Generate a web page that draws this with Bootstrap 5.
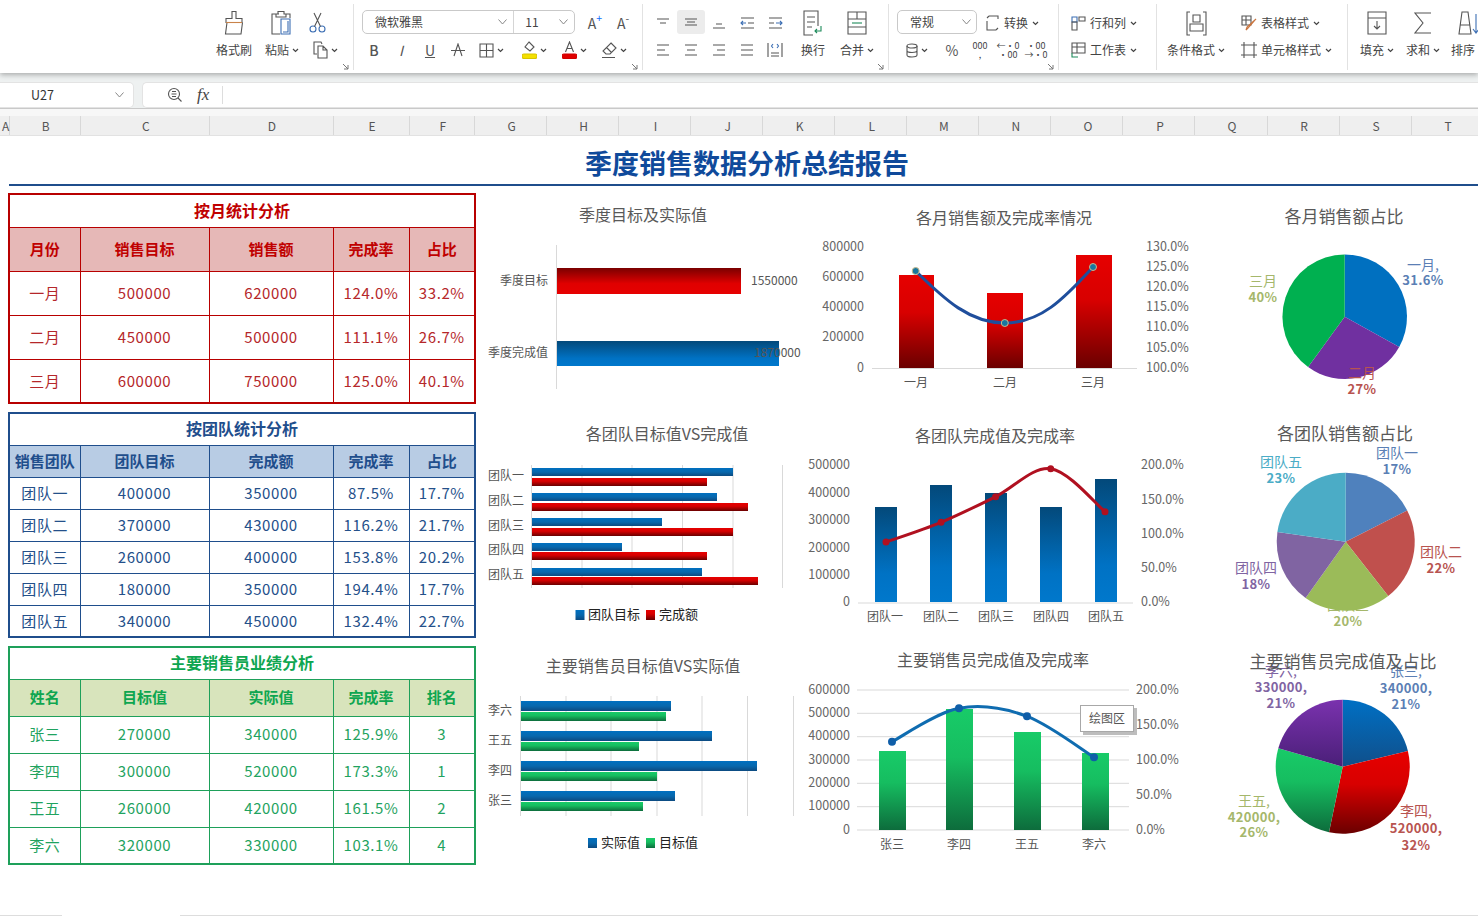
<!DOCTYPE html>
<html lang="zh-CN">
<head>
<meta charset="utf-8">
<title>季度销售数据分析总结报告</title>
<link href="https://cdn.jsdelivr.net/npm/bootstrap@5.3.0/dist/css/bootstrap.min.css" rel="stylesheet">
<style>
html,body{height:916px;overflow:hidden;background:#fff}
body{font-family:"Noto Sans CJK SC","Liberation Sans",sans-serif;color:#444;font-size:12px;width:1478px}
.rb{height:73px;padding-left:214px;background:#fff;box-shadow:0 2px 5px rgba(0,0,0,.28);position:relative;z-index:2}
.rg{position:relative;height:66px;margin-top:4px;padding-top:4px;border-right:1px solid #e2e2e2;flex:none}
.g1{width:140px}.g2{width:289px;padding-left:8px}.g3{width:246px;padding-left:6px}.g4{width:170px;padding-left:8px}.g5{width:98px;padding-left:12px}.g6{width:191px}.g7{width:130px;border-right:0;overflow:hidden}
.r1{height:30px}.r2{height:24px}
.ti{display:inline-flex;align-items:center;justify-content:center;flex:none;white-space:nowrap;line-height:1}
.ti svg{flex:none}
.wd6{width:6px}.wd8{width:8px}.wd10{width:10px}.wd18{width:18px}.wd24{width:24px}.wd27{width:27px}.wd28{width:28px}.wd30{width:30px}.wd32{width:32px}.wd34{width:34px}.wd36{width:36px}.wd38{width:38px}.wd40{width:40px}.wd47{width:47px}.wd48{width:48px}.wd54{width:54px}.wd58{width:58px}.wd78{width:78px}.wd80{width:80px}.wd11{width:11px}
.gl{font-size:14px;color:#555}
.stk{font-size:9px;line-height:9px;text-align:center;color:#444}
.ic{fill:none;stroke:#555;stroke-width:1.1}
.blu{stroke:#3d6fb4}
.cv{width:7px;height:5px;margin-left:3px;fill:none;stroke:#444;stroke-width:1.2}
.lanc{position:absolute;right:4px;bottom:0;width:7px;height:7px;fill:none;stroke:#777;stroke-width:1}
.fbox{width:213px;height:24px;border:1px solid #c9c9c9;border-radius:5px;margin-top:-2px}
.nbox{width:80px;height:24px;border:1px solid #c9c9c9;border-radius:5px;margin-top:-2px;padding:0 5px 0 12px}
.fn1{width:152px;padding:0 6px 0 12px;border-right:1px solid #d5d5d5;height:100%}
.fn2{width:60px;padding:0 6px 0 11px}
.cvb{width:9px;height:6px;fill:none;stroke:#888;stroke-width:1}
.hl{background:#ececec;border-radius:3px;height:24px;margin-top:-2px}
.fx{height:35px;background:#eef1f1;padding-top:9px;gap:8px}
.nmbox{width:134px;height:26px;background:#fff;border-radius:0 5px 5px 0;border:1px solid #e3e3e3;border-left:0;padding:0 9px 0 31px;color:#333;font-size:12.5px}
.fmbox{flex:1;height:26px;background:#fff;border-radius:5px 0 0 5px;border:1px solid #e3e3e3;border-right:0;padding-left:24px}
.fxt{font:italic 17px "Liberation Serif",serif;color:#444;margin-left:15px;padding-right:13px;border-right:1px solid #ddd;line-height:18px}
.band{height:28px;background:#f7f7f7;border-top:1px solid #c9c9c9;padding-top:7px}
.colh{display:grid;grid-template-columns:9.5px 71.5px 128.5px 124px 76px 65.5px repeat(14,72.05px);height:20px;background:#efefef;color:#555;font-size:12px;line-height:20px;text-align:center;overflow:hidden;border-bottom:1px solid #e2e2e2}
.colh span{border-right:1px solid #d8d8d8;padding-left:2px}
.rpt{margin-left:9px;height:50px;border-bottom:2px solid #1f4e8c;color:#0f4a9b;font-size:27px;font-weight:700;line-height:53px;text-align:center;padding-left:7px;letter-spacing:0}
.lft{width:467px;margin:7px 5px 0 8px;flex:none;gap:8px}
.tbx{table-layout:fixed;width:467px;margin:0;border-collapse:collapse}
.table.tbx{border-width:2px;border-style:solid}
.table.tbx>*>*>*{padding:0;text-align:center;vertical-align:middle;font-size:15px;letter-spacing:.6px;border-width:1px;border-style:solid;line-height:1.1}
.table.tbx .ttl>*{font-size:16px;font-weight:700;letter-spacing:0}
.table.tbx .hd>*{font-weight:700;letter-spacing:0}
.c1{width:71px}.c2{width:129px}.c3{width:124px}.c4{width:76px}.c5{width:66px}
.table.t-red{--bs-table-color:#b5272a;--bs-table-border-color:#c00000;border-color:#b80000}
.table.t-red .ttl>*,.table.t-red .hd>*{color:#c00000}
.table.t-red .hd>*{background:#e6b8b7}
.table.t-blu{--bs-table-color:#24508a;--bs-table-border-color:#1f4e8c;border-color:#1f4e8c}
.table.t-blu .ttl>*,.table.t-blu .hd>*{color:#1f4e8c}
.table.t-blu .hd>*{background:#b8cce4}
.table.t-grn{--bs-table-color:#1fa35f;--bs-table-border-color:#1ea05a;border-color:#1ea05a}
.table.t-grn .ttl>*,.table.t-grn .hd>*{color:#0fa650}
.table.t-grn .hd>*{background:#d8e4bc}
.h33{height:33px}.h44{height:44px}.h32{height:32px}.h37{height:37px}
.chs{display:grid;grid-template-columns:325px 395px 278px;grid-template-rows:225px 225px 230px;margin-top:4px}
.chs svg{display:block;overflow:visible}
.chs text{font-family:"Noto Sans CJK SC","Liberation Sans",sans-serif;dominant-baseline:central;fill:#666;font-size:12.5px;transform:translateY(-1.6px)}
.chs text.tt{font-size:16px;fill:#595959;text-anchor:middle}
.chs text.tp{font-size:17px}
.chs text.mid{text-anchor:middle}
.chs text.end{text-anchor:end}
.chs text.sm{font-size:12px;fill:#555}
.chs text.lg{font-size:13px;fill:#222}
.chs text.pl{font-size:14px;text-anchor:middle}
.chs text.pb{font-size:13px;font-weight:700;text-anchor:middle;letter-spacing:.3px}
.chs text.cb{fill:#5b7fb5}.chs text.cr{fill:#b85450}.chs text.cg{fill:#a5b76b}.chs text.cp{fill:#8064a2}.chs text.ct{fill:#4bacc6}
.ax{stroke:#d9d9d9;stroke-width:1;fill:none}
.footln{height:1px;margin-top:45px;background:linear-gradient(90deg,#ddd 62px,#fff 62px,#fff 180px,#ddd 180px)}
</style>
</head>
<body>
<svg width="0" height="0" class="d-block position-absolute">
<defs>
<symbol id="cv" viewBox="0 0 7 5"><path d="M1 1l2.500 2.500L6 1"/></symbol>
<symbol id="cvb" viewBox="0 0 9 6"><path d="M.5.500l4 4.500 4-4.500"/></symbol>
<symbol id="lan" viewBox="0 0 7 7"><path d="M1 1l5 5M6 2v4H2"/></symbol>
<linearGradient id="rd1" x1="0" y1="0" x2="0" y2="1"><stop offset="0" stop-color="#7a0000"/><stop offset=".6" stop-color="#e00000"/><stop offset="1" stop-color="#e60000"/></linearGradient>
<linearGradient id="rd2" x1="0" y1="0" x2="0" y2="1"><stop offset="0" stop-color="#e60000"/><stop offset=".4" stop-color="#d80000"/><stop offset="1" stop-color="#6a0000"/></linearGradient>
<linearGradient id="bl1" x1="0" y1="0" x2="0" y2="1"><stop offset="0" stop-color="#03497a"/><stop offset=".7" stop-color="#0072c4"/><stop offset="1" stop-color="#0078cc"/></linearGradient>
<linearGradient id="bl2" x1="0" y1="0" x2="0" y2="1"><stop offset="0" stop-color="#0070c0"/><stop offset=".5" stop-color="#0868ad"/><stop offset="1" stop-color="#0c4a80"/></linearGradient>
<linearGradient id="gr1" x1="0" y1="0" x2="0" y2="1"><stop offset="0" stop-color="#18cb68"/><stop offset=".4" stop-color="#16bd60"/><stop offset="1" stop-color="#0d6c3c"/></linearGradient>
<linearGradient id="pp1" x1="0" y1="0" x2="0" y2="1"><stop offset="0" stop-color="#7a32ae"/><stop offset="1" stop-color="#4a1f78"/></linearGradient>
<linearGradient id="pb3" x1="0" y1="0" x2="0" y2="1"><stop offset="0" stop-color="#0070c4"/><stop offset="1" stop-color="#104f8a"/></linearGradient>
</defs>
</svg>

<header class="rb d-flex">
  <div class="rg g1">
    <div class="r1 d-flex align-items-center">
      <span class="ti wd40"><svg class="ic" width="22" height="26" viewBox="0 0 22 26"><path d="M9 1.500h4v7h6v4H3v-4h6zM4 12.500L2.500 24H18l1.500-11.500"/><path d="M3 12.500h16" stroke="#c9834a"/></svg></span>
      <span class="ti wd54"><svg class="ic" width="22" height="26" viewBox="0 0 22 26"><path d="M9 4H2v20h8M15 4h5v4M8 4V1.500h6V4h2v3H6V4z"/><path class="blu" d="M11 9h9v15h-9zM13 22h5V11"/></svg></span>
      <span class="ti wd18"><svg class="ic blu" width="17" height="22" viewBox="0 0 17 22"><circle cx="4" cy="17" r="3"/><circle cx="13" cy="17" r="3"/><path stroke="#555" d="M5.500 14.500L12 1M11.500 14.500L5 1"/></svg></span>
    </div>
    <div class="r2 d-flex align-items-center">
      <span class="ti wd40">格式刷</span><span class="wd10"></span>
      <span class="ti wd36">粘贴<svg class="cv"><use href="#cv"/></svg></span><span class="wd10"></span>
      <span class="ti wd30"><svg class="ic" width="15" height="18" viewBox="0 0 15 18"><path d="M4 13H1V1h7l1 2"/><path d="M5 5h5l4 4v8H5zM10 5v4h4"/></svg><svg class="cv"><use href="#cv"/></svg></span>
    </div>
    <svg class="lanc"><use href="#lan"/></svg>
  </div>
  <div class="rg g2">
    <div class="r1 d-flex align-items-center">
      <div class="fbox d-flex align-items-center">
        <div class="fn1 d-flex align-items-center justify-content-between"><span>微软雅黑</span><svg class="cvb"><use href="#cvb"/></svg></div>
        <div class="fn2 d-flex align-items-center justify-content-between"><span>11</span><svg class="cvb"><use href="#cvb"/></svg></div>
      </div>
      <span class="wd6"></span>
      <span class="ti wd28 gl">A<sup class="text-primary">+</sup></span>
      <span class="ti wd28 gl">A<sup>-</sup></span>
    </div>
    <div class="r2 d-flex align-items-center">
      <span class="ti wd24 gl fw-medium">B</span>
      <span class="ti wd30 gl fst-italic">I</span>
      <span class="ti wd28 gl text-decoration-underline">U</span>
      <span class="ti wd28"><svg class="ic" width="14" height="14" viewBox="0 0 14 14"><path d="M3 13L7 1l4 12M0 7.500h14"/></svg></span>
      <span class="ti wd38"><svg class="ic" width="15" height="15" viewBox="0 0 15 15"><path d="M1 1h13v13H1zM7.500 1v13M1 7.500h13"/></svg><svg class="cv"><use href="#cv"/></svg></span>
      <span class="ti wd48"><svg class="ic" width="15" height="18" viewBox="0 0 15 18"><path d="M7 1l5 5-4 4-5-4zM3 6l4-5"/><rect x="0" y="13" width="15" height="4.500" rx="2" fill="#f4e000" stroke="#d8c400"/></svg><svg class="cv"><use href="#cv"/></svg></span>
      <span class="ti wd32"><svg class="ic" width="15" height="18" viewBox="0 0 15 18"><path d="M3.500 11L7.500 1l4 10M5 7.500h5"/><rect x="0" y="13" width="15" height="4.500" rx="2" fill="#e00000" stroke="#d00000"/></svg><svg class="cv"><use href="#cv"/></svg></span>
      <span class="ti wd47"><svg class="ic" width="16" height="17" viewBox="0 0 16 17"><path d="M10 1l5 5-6 6H5L2 9zM5.500 5.500l5 5M1 15.500h13"/></svg><svg class="cv"><use href="#cv"/></svg></span>
    </div>
    <svg class="lanc"><use href="#lan"/></svg>
  </div>
  <div class="rg g3">
    <div class="r1 d-flex align-items-center">
      <span class="ti wd28"><svg class="ic" width="14" height="14" viewBox="0 0 14 14"><path d="M1 3h12M4 7h6"/></svg></span>
      <span class="ti wd28 hl"><svg class="ic" width="14" height="14" viewBox="0 0 14 14"><path d="M1 4h12M3 7h8M1 10h12"/></svg></span>
      <span class="ti wd28"><svg class="ic" width="14" height="14" viewBox="0 0 14 14"><path d="M4 8h6M1 12h12"/></svg></span>
      <span class="ti wd28"><svg class="ic" width="15" height="14" viewBox="0 0 15 14"><path d="M1 2h13M8 7h6M1 12h13"/><path class="blu" d="M6 7H1M3 5L1 7l2 2"/></svg></span>
      <span class="ti wd28"><svg class="ic" width="15" height="14" viewBox="0 0 15 14"><path d="M1 2h13M1 7h5M1 12h13"/><path class="blu" d="M8 7h6M12 5l2 2-2 2"/></svg></span>
      <span class="ti wd48"><svg class="ic" width="20" height="26" viewBox="0 0 20 26"><path d="M15 16V1H1v24h9M4 7h8M4 12h8M4 17h5"/><path stroke="#1c8a5a" d="M18 16v5h-6M14 19l-2 2 2 2"/></svg></span>
      <span class="ti wd40"><svg class="ic" width="20" height="24" viewBox="0 0 20 24"><path d="M1 1h18v22H1zM1 8h18M1 16h18M10 1v7"/><path d="M5 12h10" stroke="#1c8a5a"/></svg></span>
    </div>
    <div class="r2 d-flex align-items-center">
      <span class="ti wd28"><svg class="ic" width="14" height="14" viewBox="0 0 14 14"><path d="M1 2h12M1 7h8M1 12h12"/></svg></span>
      <span class="ti wd28"><svg class="ic" width="14" height="14" viewBox="0 0 14 14"><path d="M1 2h12M3 7h8M1 12h12"/></svg></span>
      <span class="ti wd28"><svg class="ic" width="14" height="14" viewBox="0 0 14 14"><path d="M1 2h12M5 7h8M1 12h12"/></svg></span>
      <span class="ti wd28"><svg class="ic" width="14" height="14" viewBox="0 0 14 14"><path d="M1 2h12M1 7h12M1 12h12"/></svg></span>
      <span class="ti wd28"><svg class="ic" width="16" height="16" viewBox="0 0 16 16"><path d="M1 1v14M15 1v14M4 11h8M4 14h8"/><path class="blu" d="M6 2L4.500 4 6 6M10 2l1.500 2L10 6"/></svg></span>
      <span class="ti wd48">换行</span>
      <span class="ti wd40">合并<svg class="cv"><use href="#cv"/></svg></span>
    </div>
    <svg class="lanc"><use href="#lan"/></svg>
  </div>
  <div class="rg g4">
    <div class="r1 d-flex align-items-center">
      <div class="nbox d-flex align-items-center justify-content-between"><span>常规</span><svg class="cvb"><use href="#cvb"/></svg></div>
      <span class="wd8"></span>
      <span class="ti"><svg class="ic me-1" width="15" height="16" viewBox="0 0 15 16"><path d="M13 4V1H4M4 1L2 3M2 6v9h9M11 15l2-2"/></svg>转换<svg class="cv ms-1"><use href="#cv"/></svg></span>
    </div>
    <div class="r2 d-flex align-items-center">
      <span class="wd6"></span>
      <span class="ti wd27"><svg class="ic" width="12" height="15" viewBox="0 0 12 15"><ellipse cx="6" cy="3" rx="5" ry="2"/><path d="M1 3v9c0 1.500 2 2 5 2s5-.5 5-2V3M1 7.500c0 1.500 2 2 5 2s5-.5 5-2"/></svg><svg class="cv"><use href="#cv"/></svg></span>
      <span class="wd8"></span>
      <span class="ti wd28 gl">%</span>
      <span class="ti wd28 stk">000<br>,</span>
      <span class="ti wd28 stk">←·0<br>·00</span>
      <span class="ti wd28 stk">·00<br>→·0</span>
    </div>
    <svg class="lanc"><use href="#lan"/></svg>
  </div>
  <div class="rg g5">
    <div class="r1 d-flex align-items-center">
      <span class="ti"><svg class="ic me-1" width="15" height="15" viewBox="0 0 15 15"><path class="blu" d="M1 1h5v5H1z"/><path d="M1 6h5v8H1zM8 1h6v4H8z"/></svg>行和列<svg class="cv ms-1"><use href="#cv"/></svg></span>
    </div>
    <div class="r2 d-flex align-items-center">
      <span class="ti"><svg class="ic me-1" width="15" height="16" viewBox="0 0 15 16"><path d="M1 1h13v10H1zM1 5h13M6 1v10"/><path d="M1 11v4h6" stroke="#1c8a5a"/></svg>工作表<svg class="cv ms-1"><use href="#cv"/></svg></span>
    </div>
  </div>
  <div class="rg g6">
    <div class="r1 d-flex align-items-center">
      <span class="ti wd78"><svg class="ic" width="21" height="25" viewBox="0 0 21 25"><path d="M4 1H1v23h3M17 1h3v23h-3M7 4h7v7H7zM4 13h13v7H4z"/></svg></span>
      <span class="wd6"></span>
      <span class="ti"><svg class="ic me-1" width="16" height="16" viewBox="0 0 16 16"><path d="M1 1h9v9H1zM1 5h9M5 1v9"/><path stroke="#c9753f" d="M15 4l-8 9-2 2 1-3z"/></svg>表格样式<svg class="cv ms-1"><use href="#cv"/></svg></span>
    </div>
    <div class="r2 d-flex align-items-center">
      <span class="ti wd78">条件格式<svg class="cv"><use href="#cv"/></svg></span>
      <span class="wd6"></span>
      <span class="ti"><svg class="ic me-1" width="16" height="16" viewBox="0 0 16 16"><path d="M0 3h16M0 13h16M3 0v16M13 0v16"/></svg>单元格样式<svg class="cv ms-1"><use href="#cv"/></svg></span>
    </div>
  </div>
  <div class="rg g7">
    <div class="r1 d-flex align-items-center">
      <span class="ti wd58"><svg class="ic" width="20" height="24" viewBox="0 0 20 24"><path d="M1 1h18v22H1zM1 7h18"/><path d="M10 10v8M7 15l3 3 3-3"/></svg></span>
      <span class="ti wd34"><svg class="ic" width="18" height="22" viewBox="0 0 18 22"><path d="M17 1H1l8 10-8 10h16"/></svg></span>
      <span class="ti wd58"><svg class="ic" width="24" height="24" viewBox="0 0 24 24"><path d="M5 1h6l3 22H2zM3 14h10"/><path class="blu" d="M19 3v19M16 18l3 4 3-4"/></svg></span>
    </div>
    <div class="r2 d-flex align-items-center">
      <span class="ti wd58">填充<svg class="cv"><use href="#cv"/></svg></span>
      <span class="ti wd34">求和<svg class="cv"><use href="#cv"/></svg></span>
      <span class="wd11"></span>
      <span class="ti">排序</span>
    </div>
  </div>
</header>

<div class="fx d-flex">
  <div class="nmbox d-flex align-items-center justify-content-between flex-none"><span>U27</span><svg class="cvb"><use href="#cvb"/></svg></div>
  <div class="fmbox d-flex align-items-center">
    <svg class="ic" width="15" height="16" viewBox="0 0 15 16"><circle cx="7" cy="7" r="5.500"/><path d="M11 11l3.500 3.500M4.500 7h5M5 4.500h4M5 9.500h4"/></svg>
    <span class="fxt">fx</span>
  </div>
</div>
<div class="band">
  <div class="colh">
    <span>A</span><span>B</span><span>C</span><span>D</span><span>E</span><span>F</span><span>G</span><span>H</span><span>I</span><span>J</span><span>K</span><span>L</span><span>M</span><span>N</span><span>O</span><span>P</span><span>Q</span><span>R</span><span>S</span><span>T</span>
  </div>
</div>

<main>
  <div class="rpt">季度销售数据分析总结报告</div>
  <div class="d-flex">
    <div class="lft d-flex flex-column">
      <table class="table table-bordered tbx t-red">
        <colgroup><col class="c1"><col class="c2"><col class="c3"><col class="c4"><col class="c5"></colgroup>
        <thead>
          <tr class="ttl h33"><th colspan="5">按月统计分析</th></tr>
          <tr class="hd h44"><th>月份</th><th>销售目标</th><th>销售额</th><th>完成率</th><th>占比</th></tr>
        </thead>
        <tbody>
          <tr class="h44"><td>一月</td><td>500000</td><td>620000</td><td>124.0%</td><td>33.2%</td></tr>
          <tr class="h44"><td>二月</td><td>450000</td><td>500000</td><td>111.1%</td><td>26.7%</td></tr>
          <tr class="h44"><td>三月</td><td>600000</td><td>750000</td><td>125.0%</td><td>40.1%</td></tr>
        </tbody>
      </table>
      <table class="table table-bordered tbx t-blu">
        <colgroup><col class="c1"><col class="c2"><col class="c3"><col class="c4"><col class="c5"></colgroup>
        <thead>
          <tr class="ttl h32"><th colspan="5">按团队统计分析</th></tr>
          <tr class="hd h32"><th>销售团队</th><th>团队目标</th><th>完成额</th><th>完成率</th><th>占比</th></tr>
        </thead>
        <tbody>
          <tr class="h32"><td>团队一</td><td>400000</td><td>350000</td><td>87.5%</td><td>17.7%</td></tr>
          <tr class="h32"><td>团队二</td><td>370000</td><td>430000</td><td>116.2%</td><td>21.7%</td></tr>
          <tr class="h32"><td>团队三</td><td>260000</td><td>400000</td><td>153.8%</td><td>20.2%</td></tr>
          <tr class="h32"><td>团队四</td><td>180000</td><td>350000</td><td>194.4%</td><td>17.7%</td></tr>
          <tr class="h32"><td>团队五</td><td>340000</td><td>450000</td><td>132.4%</td><td>22.7%</td></tr>
        </tbody>
      </table>
      <table class="table table-bordered tbx t-grn">
        <colgroup><col class="c1"><col class="c2"><col class="c3"><col class="c4"><col class="c5"></colgroup>
        <thead>
          <tr class="ttl h32"><th colspan="5">主要销售员业绩分析</th></tr>
          <tr class="hd h37"><th>姓名</th><th>目标值</th><th>实际值</th><th>完成率</th><th>排名</th></tr>
        </thead>
        <tbody>
          <tr class="h37"><td>张三</td><td>270000</td><td>340000</td><td>125.9%</td><td>3</td></tr>
          <tr class="h37"><td>李四</td><td>300000</td><td>520000</td><td>173.3%</td><td>1</td></tr>
          <tr class="h37"><td>王五</td><td>260000</td><td>420000</td><td>161.5%</td><td>2</td></tr>
          <tr class="h37"><td>李六</td><td>320000</td><td>330000</td><td>103.1%</td><td>4</td></tr>
        </tbody>
      </table>
    </div>

    <div class="chs">
      <!-- row 1 -->
      <svg width="325" height="225" viewBox="480 190 325 225">
        <text class="tt" x="643" y="216">季度目标及实际值</text>
        <path class="ax" d="M556.500 245V389"/>
        <rect x="557" y="268" width="184" height="26" fill="url(#rd1)"/>
        <rect x="557" y="341" width="222" height="25" fill="url(#bl1)"/>
        <text class="sm end" x="548" y="281">季度目标</text>
        <text class="sm end" x="548" y="353">季度完成值</text>
        <text class="sm" x="751" y="281">1550000</text>
        <text class="sm" x="754" y="353">1870000</text>
      </svg>
      <svg width="395" height="225" viewBox="805 190 395 225">
        <text class="tt" x="1004" y="219">各月销售额及完成率情况</text>
        <text class="end" x="864" y="247">800000</text><text class="end" x="864" y="277">600000</text><text class="end" x="864" y="307">400000</text><text class="end" x="864" y="337">200000</text><text class="end" x="864" y="368">0</text>
        <text x="1146" y="247">130.0%</text><text x="1146" y="267">125.0%</text><text x="1146" y="287">120.0%</text><text x="1146" y="307">115.0%</text><text x="1146" y="327">110.0%</text><text x="1146" y="348">105.0%</text><text x="1146" y="368">100.0%</text>
        <rect x="899" y="275" width="35" height="93" fill="url(#rd2)"/>
        <rect x="987" y="293" width="36" height="75" fill="url(#rd2)"/>
        <rect x="1076" y="255" width="36" height="113" fill="url(#rd2)"/>
        <path class="ax" d="M872 368.500H1137"/>
        <path d="M915.700 271C945 300 970 323 1004.800 323C1040 323 1063 300 1093 267" fill="none" stroke="#1f4e9c" stroke-width="3"/>
        <g fill="#17769f" stroke="#c9b98a"><circle cx="915.700" cy="271" r="3.500"/><circle cx="1004.800" cy="323" r="3.500"/><circle cx="1093" cy="267" r="3.500"/></g>
        <text class="mid sm" x="916" y="383">一月</text><text class="mid sm" x="1005" y="383">二月</text><text class="mid sm" x="1093" y="383">三月</text>
      </svg>
      <svg width="278" height="225" viewBox="1200 190 278 225">
        <text class="tt tp" x="1344" y="217">各月销售额占比</text>
        <path d="M1344.700 316.700V254.400A62.300 62.300 0 0 1 1399.200 346.900Z" fill="#0070c0"/>
        <path d="M1344.700 316.700L1399.200 346.900A62.300 62.300 0 0 1 1308.100 367.100Z" fill="#7030a0"/>
        <path d="M1344.700 316.700L1308.100 367.100A62.300 62.300 0 0 1 1344.700 254.400Z" fill="#00b050"/>
        <text class="pl cb" x="1423" y="266">一月,</text><text class="pb cb" x="1423" y="281">31.6%</text>
        <text class="pl cr" x="1362" y="374">二月</text><text class="pb cr" x="1362" y="390">27%</text>
        <text class="pl cg" x="1263" y="282">三月</text><text class="pb cg" x="1263" y="298">40%</text>
      </svg>
      <!-- row 2 -->
      <svg width="325" height="225" viewBox="480 415 325 225">
        <text class="tt" x="667" y="435">各团队目标值VS完成值</text>
        <path class="ax" d="M531.500 465V588M582 465V588M632 465V588M682.500 465V588M733 465V588M782.500 465V588"/>
        <g fill="url(#bl2)"><rect x="532" y="468" width="201" height="8"/><rect x="532" y="493" width="185" height="8"/><rect x="532" y="518" width="130" height="8"/><rect x="532" y="543" width="90" height="8"/><rect x="532" y="568" width="170" height="8"/></g>
        <g fill="url(#rd2)"><rect x="532" y="478" width="175" height="8"/><rect x="532" y="503" width="216" height="8"/><rect x="532" y="528" width="201" height="8"/><rect x="532" y="552" width="175" height="8"/><rect x="532" y="577" width="226" height="8"/></g>
        <text class="sm end" x="524" y="476">团队一</text><text class="sm end" x="524" y="501">团队二</text><text class="sm end" x="524" y="526">团队三</text><text class="sm end" x="524" y="550">团队四</text><text class="sm end" x="524" y="575">团队五</text>
        <rect x="575.500" y="610" width="9" height="10" fill="url(#bl2)"/><text class="lg" x="588" y="615">团队目标</text>
        <rect x="646" y="610" width="9" height="10" fill="url(#rd2)"/><text class="lg" x="659" y="615">完成额</text>
      </svg>
      <svg width="395" height="225" viewBox="805 415 395 225">
        <text class="tt" x="995" y="437">各团队完成值及完成率</text>
        <text class="end" x="850" y="465">500000</text><text class="end" x="850" y="493">400000</text><text class="end" x="850" y="520">300000</text><text class="end" x="850" y="548">200000</text><text class="end" x="850" y="575">100000</text><text class="end" x="850" y="602">0</text>
        <text x="1141" y="465">200.0%</text><text x="1141" y="500">150.0%</text><text x="1141" y="534">100.0%</text><text x="1141" y="568">50.0%</text><text x="1141" y="602">0.0%</text>
        <g fill="url(#bl1)"><rect x="875" y="507" width="22" height="95"/><rect x="930" y="485" width="22" height="117"/><rect x="985" y="493" width="22" height="109"/><rect x="1040" y="507" width="22" height="95"/><rect x="1095" y="479" width="22" height="123"/></g>
        <path class="ax" d="M858 603H1133"/>
        <path d="M886 542C895.200 538.700 922.700 529.900 941 522.300C959.300 514.700 977.300 505.700 995.600 496.700C1013.900 487.700 1032.500 466.200 1050.700 468.700C1068.900 471.200 1096 504.500 1105 511.700" fill="none" stroke="#b01020" stroke-width="3"/>
        <g fill="#b01020"><circle cx="886" cy="542" r="3.500"/><circle cx="941" cy="522.300" r="3.500"/><circle cx="995.600" cy="496.700" r="3.500"/><circle cx="1050.700" cy="468.700" r="3.500"/><circle cx="1105" cy="511.700" r="3.500"/></g>
        <text class="mid sm" x="885" y="617">团队一</text><text class="mid sm" x="941" y="617">团队二</text><text class="mid sm" x="996" y="617">团队三</text><text class="mid sm" x="1051" y="617">团队四</text><text class="mid sm" x="1106" y="617">团队五</text>
      </svg>
      <svg width="278" height="225" viewBox="1200 415 278 225">
        <text class="tt tp" x="1345" y="434">各团队销售额占比</text>
        <text class="pl cg" x="1348" y="606">团队三</text>
        <path d="M1345.700 541.700V472.700A69 69 0 0 1 1407.200 510.400Z" fill="#4f81bd"/>
        <path d="M1345.700 541.700L1407.200 510.400A69 69 0 0 1 1388.200 596.100Z" fill="#c0504d"/>
        <path d="M1345.700 541.700L1388.200 596.100A69 69 0 0 1 1305.600 597.900Z" fill="#9bbb59"/>
        <path d="M1345.700 541.700L1305.600 597.900A69 69 0 0 1 1277.400 532.100Z" fill="#8064a2"/>
        <path d="M1345.700 541.700L1277.400 532.100A69 69 0 0 1 1345.700 472.700Z" fill="#4bacc6"/>
        <text class="pl cb" x="1397" y="454">团队一</text><text class="pb cb" x="1397" y="470">17%</text>
        <text class="pl cr" x="1441" y="553">团队二</text><text class="pb cr" x="1441" y="569">22%</text>
        <text class="pb cg" x="1348" y="622">20%</text>
        <text class="pl cp" x="1256" y="569">团队四</text><text class="pb cp" x="1256" y="585">18%</text>
        <text class="pl ct" x="1281" y="463">团队五</text><text class="pb ct" x="1281" y="479">23%</text>
      </svg>
      <!-- row 3 -->
      <svg width="325" height="230" viewBox="480 640 325 230">
        <text class="tt" x="643" y="667">主要销售员目标值VS实际值</text>
        <path class="ax" d="M520.500 696V816M566 696V816M611 696V816M657 696V816M702 696V816M747.500 696V816M793.500 696V816"/>
        <g fill="url(#bl2)"><rect x="521" y="701" width="150" height="10"/><rect x="521" y="731" width="191" height="10"/><rect x="521" y="761" width="236" height="10"/><rect x="521" y="791" width="154" height="10"/></g>
        <g fill="url(#gr1)"><rect x="521" y="712" width="145" height="9"/><rect x="521" y="742" width="118" height="9"/><rect x="521" y="772" width="136" height="9"/><rect x="521" y="802" width="122" height="9"/></g>
        <text class="sm end" x="512" y="711">李六</text><text class="sm end" x="512" y="741">王五</text><text class="sm end" x="512" y="771">李四</text><text class="sm end" x="512" y="801">张三</text>
        <rect x="588" y="838" width="9" height="10" fill="url(#bl2)"/><text class="lg" x="601" y="843">实际值</text>
        <rect x="646" y="838" width="9" height="10" fill="url(#gr1)"/><text class="lg" x="659" y="843">目标值</text>
      </svg>
      <svg width="395" height="230" viewBox="805 640 395 230">
        <text class="tt" x="993" y="661">主要销售员完成值及完成率</text>
        <path class="ax" d="M857 690H1129M857 713.300H1129M857 736.700H1129M857 760H1129M857 783.300H1129M857 806.700H1129M857 830H1129"/>
        <text class="end" x="850" y="690">600000</text><text class="end" x="850" y="713">500000</text><text class="end" x="850" y="736">400000</text><text class="end" x="850" y="760">300000</text><text class="end" x="850" y="783">200000</text><text class="end" x="850" y="806">100000</text><text class="end" x="850" y="830">0</text>
        <text x="1136" y="690">200.0%</text><text x="1136" y="725">150.0%</text><text x="1136" y="760">100.0%</text><text x="1136" y="795">50.0%</text><text x="1136" y="830">0.0%</text>
        <g fill="url(#gr1)"><rect x="879" y="751" width="27" height="79"/><rect x="946" y="709" width="27" height="121"/><rect x="1014" y="732" width="27" height="98"/><rect x="1082" y="753" width="27" height="77"/></g>
        <path d="M892 741.700C903 736 936.500 712.500 959 708.300C981.500 704.100 1004.700 708.100 1027 716.300C1049.300 724.500 1083 750.500 1094 757.300" fill="none" stroke="#0f6cb0" stroke-width="3"/>
        <g fill="#0f5ea8"><circle cx="892" cy="741.700" r="4"/><circle cx="959" cy="708.300" r="4"/><circle cx="1027" cy="716.300" r="4"/><circle cx="1094" cy="757.300" r="4"/></g>
        <text class="mid sm" x="892" y="845">张三</text><text class="mid sm" x="959" y="845">李四</text><text class="mid sm" x="1027" y="845">王五</text><text class="mid sm" x="1094" y="845">李六</text>
        <rect x="1083" y="708" width="54" height="27" fill="#bdbdbd"/>
        <rect x="1080.500" y="705.500" width="53" height="26" fill="#fff" stroke="#a8a8a8"/>
        <text class="mid sm" x="1107" y="719.500">绘图区</text>
      </svg>
      <svg width="278" height="230" viewBox="1200 640 278 230">
        <path d="M1342.700 766.700V699.700A67 67 0 0 1 1407.900 751.100Z" fill="url(#pb3)"/>
        <path d="M1342.700 766.700L1407.900 751.100A67 67 0 0 1 1329 832.300Z" fill="url(#rd2)"/>
        <path d="M1342.700 766.700L1329 832.300A67 67 0 0 1 1278.300 748.200Z" fill="url(#gr1)"/>
        <path d="M1342.700 766.700L1278.300 748.200A67 67 0 0 1 1342.700 699.700Z" fill="url(#pp1)"/>
        <text class="pl cb" x="1406" y="672">张三,</text><text class="pb cb" x="1406" y="689">340000,</text><text class="pb cb" x="1406" y="705">21%</text>
        <text class="pl cp" x="1281" y="672">李六,</text><text class="pb cp" x="1281" y="688">330000,</text><text class="pb cp" x="1281" y="704">21%</text>
        <text class="pl cg" x="1254" y="802">王五,</text><text class="pb cg" x="1254" y="818">420000,</text><text class="pb cg" x="1254" y="833">26%</text>
        <text class="pl cr" x="1416" y="812">李四,</text><text class="pb cr" x="1416" y="829">520000,</text><text class="pb cr" x="1416" y="846">32%</text>
        <text class="tt tp" x="1343" y="662">主要销售员完成值及占比</text>
      </svg>
    </div>
  </div>
  <div class="footln"></div>
</main>
<script src="https://cdn.jsdelivr.net/npm/bootstrap@5.3.0/dist/js/bootstrap.bundle.min.js"></script>
</body>
</html>
